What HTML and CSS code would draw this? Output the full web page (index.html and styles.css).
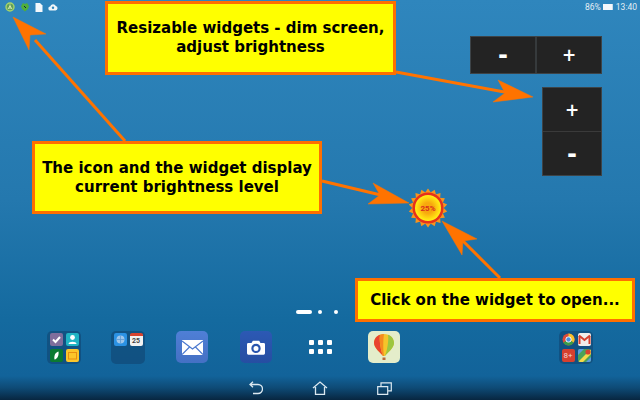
FILE: index.html
```html
<!DOCTYPE html>
<html lang="en">
<head>
  <meta charset="UTF-8" />
  <title>Brightness widgets</title>
  <link rel="stylesheet" href="styles.css">
</head>
<body>
  <div class="desktop">
    <div class="status-bar">
      <div class="status-icons">
        <svg width="10" height="10" viewBox="0 0 10 10"><circle cx="5" cy="5" r="4" fill="#5f9e5a" stroke="#a5d46a" stroke-width="1.4"/><path d="M5 2.500V7M3 7l2-3 2 3" fill="none" stroke="#d8eeb0" stroke-width="1"/></svg>
        <svg width="10" height="10" viewBox="0 0 10 10"><path d="M3 1l2 1 2-1 2 3-1 3-3 2.500L2 7 1 4z" fill="#4fae3c"/><path d="M4 4l2 2" stroke="#123" stroke-width="1"/></svg>
        <svg width="8" height="9" viewBox="0 0 8 9"><path d="M0.500 0H5L7.500 2.500V9H0.500z" fill="#f4f8fb"/></svg>
        <svg width="10" height="8" viewBox="0 0 10 8"><path d="M2.500 7.500a2 2 0 0 1-.3-4A3 3 0 0 1 7.800 3a2.300 2.300 0 0 1-.2 4.500z" fill="#f0f5f8"/><circle cx="5" cy="4.800" r="1.200" fill="#2e86bf"/></svg>
      </div>
      <div class="status-right">
        <span>86%</span>
        <span class="battery"></span>
        <span class="clock">13:40</span>
      </div>
    </div>

    <div class="pager">
      <span class="page-dash"></span>
      <span class="page-dot"></span>
      <span class="page-dot"></span>
    </div>

    <div class="dock">
      <div class="folder">
        <span class="mini mini-purple"><svg viewBox="0 0 13 13"><path d="M3 6.500l2.500 2.500L10 4" fill="none" stroke="#fff" stroke-width="2"/></svg></span>
        <span class="mini mini-teal"><svg viewBox="0 0 13 13"><circle cx="6.500" cy="4.500" r="2.400" fill="#fff"/><path d="M2.500 11c0-3 8-3 8 0z" fill="#fff"/></svg></span>
        <span class="mini mini-green"><svg viewBox="0 0 13 13"><path d="M8.500 2.500C5 3.500 3.800 7 4.500 10.500 7.500 10 9 6 8.500 2.500z" fill="#fff"/></svg></span>
        <span class="mini mini-yellow"><svg viewBox="0 0 13 13"><rect x="2.500" y="3.500" width="8" height="6.500" fill="none" stroke="#e88f10" stroke-width="1"/></svg></span>
      </div>
      <div class="folder">
        <span class="mini mini-blue"><svg viewBox="0 0 13 13"><circle cx="6.500" cy="6.500" r="4" fill="#9fc6ea"/><path d="M2.500 6.500h8M6.500 2.500v8" stroke="#5f9ad2" stroke-width=".8"/></svg></span>
        <span class="mini mini-cal"><span class="cal-day">25</span></span>
      </div>
      <div class="app app-mail">
        <svg width="21" height="15" viewBox="0 0 21 15"><rect width="21" height="15" fill="#fff"/><path d="M0 1l10.500 8L21 1M0 14.500l7.500-7.500M21 14.500L13.500 7" fill="none" stroke="#4a78cf" stroke-width="1.200"/></svg>
      </div>
      <div class="app app-camera">
        <svg width="18" height="15" viewBox="0 0 20 16"><path d="M1.500 3H5l1.500-2.500h7L15 3h3.500A1.500 1.500 0 0 1 20 4.500v10a1.500 1.500 0 0 1-1.500 1.500h-17A1.500 1.500 0 0 1 0 14.500v-10A1.500 1.500 0 0 1 1.500 3z" fill="#fff"/><circle cx="10" cy="9" r="4" fill="none" stroke="#2a55ae" stroke-width="2.400"/></svg>
      </div>
      <div class="all-apps">
        <span></span><span></span><span></span><span></span><span></span><span></span>
      </div>
      <div class="app app-balloon">
        <svg width="24" height="28" viewBox="0 0 24 28"><path d="M12 1C6 1 2 5 2 10c0 5 6 9 9 13h2c3-4 9-8 9-13 0-5-4-9-10-9z" fill="#f5c52a"/><path d="M8 1.800C4.500 3 2 6 2 10c0 5 6 9 9 13-2-5-4-15-3-21.200z" fill="#e8432e"/><path d="M8 1.800C7 8 9 18 11 23h1C11 18 11 7 12 1c-1.500 0-2.800.3-4 .8z" fill="#f58a1f"/><path d="M16 1.800C19.500 3 22 6 22 10c0 5-6 9-9 13 2-5 4-15 3-21.200z" fill="#9cc63f"/><rect x="10.500" y="24.500" width="3" height="2.500" fill="#b8693a"/></svg>
      </div>
      <div class="dock-gap"></div>
      <div class="dock-gap"></div>
      <div class="folder">
        <span class="mini mini-plain"><svg viewBox="0 0 13 13"><circle cx="6.500" cy="6.500" r="6" fill="#dd4b39"/><path d="M6.500.5a6 6 0 0 1 5.200 9L6.500 6.500z" fill="#f5c32c"/><path d="M1.300 9.500a6 6 0 0 0 10.400 0L6.500 6.500z" fill="#3a9e48"/><circle cx="6.500" cy="6.500" r="3" fill="#fff"/><circle cx="6.500" cy="6.500" r="2.200" fill="#4a8fe0"/></svg></span>
        <span class="mini mini-gmail"><svg viewBox="0 0 13 13"><path d="M1.500 3v8M11.500 3v8" stroke="#d6402f" stroke-width="2"/><path d="M1 2.500l5.500 4.500L12 2.500" fill="none" stroke="#d6402f" stroke-width="2"/></svg></span>
        <span class="mini mini-gplus"><span class="gplus-text">8+</span></span>
        <span class="mini mini-plain"><svg viewBox="0 0 13 13"><rect width="13" height="13" fill="#4ca257"/><path d="M0 13L13 0v5L5 13z" fill="#f5d94a"/><path d="M0 0h6L0 6z" fill="#5b9be0"/><path d="M8 13l5-5v5z" fill="#5b9be0"/><circle cx="10" cy="3" r="2.600" fill="#d6402f"/></svg></span>
      </div>
    </div>

    <div class="nav-bar">
      <svg width="14" height="14" viewBox="0 0 14 14"><path d="M1 3.500h8a4 4 0 0 1 0 9H4M4 .8L1 3.500l3 2.700" fill="none" stroke="#dbe8f0" stroke-width="1.300"/></svg>
      <svg width="16" height="14" viewBox="0 0 16 14"><path d="M1 7l7-6 7 6M3.500 6v7.500h9V6" fill="none" stroke="#dbe8f0" stroke-width="1.300"/></svg>
      <svg width="15" height="13" viewBox="0 0 15 13"><path d="M.7 4.700h10v7.600H.7zM4 4.500V.8h10.300v8H11" fill="none" stroke="#dbe8f0" stroke-width="1.200"/></svg>
    </div>

    <div class="widget widget-h">
      <button class="widget-btn widget-minus">-</button>
      <button class="widget-btn">+</button>
    </div>
    <div class="widget widget-v">
      <button class="widget-btn">+</button>
      <button class="widget-btn widget-minus">-</button>
    </div>

    <div class="sun">
      <svg width="40" height="40" viewBox="-20 -20 40 40">
        <defs>
          <path id="spike" d="M-3.200-15L0-19.500 3.200-15z" fill="#f7941d"/>
          <radialGradient id="sunFill"><stop offset="0.400" stop-color="#f8a80e"/><stop offset="0.850" stop-color="#ffdf12"/><stop offset="1" stop-color="#fff01a"/></radialGradient>
        </defs>
        <use href="#spike"/><use href="#spike" transform="rotate(20)"/><use href="#spike" transform="rotate(40)"/>
        <use href="#spike" transform="rotate(60)"/><use href="#spike" transform="rotate(80)"/><use href="#spike" transform="rotate(100)"/>
        <use href="#spike" transform="rotate(120)"/><use href="#spike" transform="rotate(140)"/><use href="#spike" transform="rotate(160)"/>
        <use href="#spike" transform="rotate(180)"/><use href="#spike" transform="rotate(200)"/><use href="#spike" transform="rotate(220)"/>
        <use href="#spike" transform="rotate(240)"/><use href="#spike" transform="rotate(260)"/><use href="#spike" transform="rotate(280)"/>
        <use href="#spike" transform="rotate(300)"/><use href="#spike" transform="rotate(320)"/><use href="#spike" transform="rotate(340)"/>
        <circle r="15.500" fill="#e8301a"/>
        <circle r="13" fill="url(#sunFill)"/>
      </svg>
      <span class="sun-label">25%</span>
    </div>

    <svg class="arrows" width="640" height="400" viewBox="0 0 640 400">
      <g fill="#ff7300" stroke="#ff7300">
        <path d="M125 141L35 40" stroke-width="3"/>
        <path d="M13 17L46 34 30 35 29 50z" stroke-width="0.500"/>
        <path d="M396 72L510 93" stroke-width="3"/>
        <path d="M533 97L498 80 505 93 493 102z" stroke-width="0.500"/>
        <path d="M322 181L385 196" stroke-width="3"/>
        <path d="M409 203L373 183 380 195 368 204z" stroke-width="0.500"/>
        <path d="M500 278L460 238" stroke-width="3"/>
        <path d="M442 221L477 239 463 241 462 255z" stroke-width="0.500"/>
      </g>
    </svg>

    <div class="callout callout-top">Resizable widgets - dim screen,<br>adjust brightness</div>
    <div class="callout callout-left">The icon and the widget display<br>current brightness level</div>
    <div class="callout callout-open">Click on the widget to open...</div>
  </div>
</body>
</html>
```

FILE: styles.css
```css
body {
  margin: 0;
  font-family: 'Roboto', sans-serif;
}

.desktop {
  position: relative;
  width: 640px;
  height: 400px;
  overflow: hidden;
  display: flex;
  flex-direction: column;
  background: linear-gradient(#2f86bd 0%, #2478ae 50%, #146a9f 80%, #12639a 94%, #0e4a75 97%, #082640 100%);
}

/* status bar */
.status-bar {
  display: flex;
  justify-content: space-between;
  align-items: center;
  height: 14px;
  padding: 0 3px 0 5px;
  color: #e3eef5;
  font-size: 8.5px;
}

.status-icons {
  display: flex;
  align-items: center;
  gap: 5px;
}

.status-right {
  display: flex;
  align-items: center;
  gap: 2px;
}

.battery {
  width: 9px;
  height: 6px;
  background: #f4f8fb;
  border-right: 1px solid #c8dcea;
}

.clock {
  margin-left: 1px;
}

/* home screen pages */
.pager {
  display: flex;
  align-items: center;
  margin: 296px 0 0 296px;
  gap: 6px;
  height: 4px;
}

.page-dash {
  width: 16px;
  height: 4px;
  border-radius: 2px;
  background: #fff;
}

.page-dot {
  width: 4px;
  height: 4px;
  border-radius: 50%;
  background: #fff;
}

.page-dot + .page-dot {
  margin-left: 6px;
}

/* dock */
.dock {
  display: grid;
  grid-template-columns: repeat(9, 64px);
  justify-items: center;
  align-items: center;
  padding: 0 32px;
  margin-top: 16px;
  height: 34px;
}

.folder {
  display: grid;
  grid-template-columns: 13px 13px;
  grid-auto-rows: 13px;
  gap: 3px;
  align-content: start;
  width: 34px;
  height: 33px;
  box-sizing: border-box;
  padding: 2px;
  justify-content: center;
  border-radius: 5px;
  background: rgba(16, 66, 110, 0.55);
}

.mini {
  display: block;
  border-radius: 2px;
  overflow: hidden;
}

.mini svg {
  display: block;
  width: 13px;
  height: 13px;
}

.mini-purple { background: #7f6e9c; }
.mini-teal { background: #20b4c4; }
.mini-green { background: #0b7a32; }
.mini-yellow { background: #fcc62a; }
.mini-blue { background: #2b92e4; }
.mini-gmail { background: #f1eeea; }
.mini-plain { background: transparent; }

.mini-cal {
  background: #f2f2f2;
  border-top: 3px solid #d9432f;
  box-sizing: border-box;
  text-align: center;
}

.cal-day {
  display: block;
  font-size: 7px;
  line-height: 10px;
  font-weight: 700;
  color: #444;
}

.mini-gplus {
  background: #d6402f;
  text-align: center;
}

.gplus-text {
  display: block;
  font-size: 8px;
  line-height: 13px;
  color: #f5d5cf;
}

.app {
  display: flex;
  align-items: center;
  justify-content: center;
  width: 32px;
  height: 32px;
  border-radius: 5px;
}

.app-mail { background: linear-gradient(#4f7fd6, #4470c4); }
.app-camera { background: linear-gradient(#2c59b4, #264ea2); }
.app-balloon { background: #e4edca; }

.all-apps {
  display: grid;
  grid-template-columns: repeat(3, 5px);
  gap: 4px;
}

.all-apps span {
  width: 5px;
  height: 5px;
  border-radius: 1px;
  background: #fff;
}

/* navigation */
.nav-bar {
  display: grid;
  grid-template-columns: repeat(3, 64px);
  justify-content: center;
  justify-items: center;
  align-items: center;
  margin-top: 16px;
  height: 16px;
}

/* widgets on the home screen */
.widget {
  position: absolute;
  display: flex;
  box-sizing: border-box;
  background: #232323;
  border: 1px solid #3d4347;
}

.widget-h {
  left: 470px;
  top: 36px;
  width: 132px;
  height: 38px;
}

.widget-h .widget-btn + .widget-btn {
  border-left: 2px solid #363a3c;
}

.widget-v {
  left: 542px;
  top: 87px;
  width: 60px;
  height: 89px;
  flex-direction: column;
}

.widget-v .widget-btn + .widget-btn {
  border-top: 1px solid #3a3a3a;
}

.widget-btn {
  flex: 1;
  padding: 0;
  border: none;
  background: none;
  color: #fff;
  font-family: 'DejaVu Sans', sans-serif;
  font-size: 17px;
  font-weight: 700;
}

.widget-minus {
  font-size: 24px;
}

/* brightness sun */
.sun {
  position: absolute;
  left: 408px;
  top: 188px;
  width: 40px;
  height: 40px;
  display: flex;
  align-items: center;
  justify-content: center;
}

.sun svg {
  position: absolute;
  left: 0;
  top: 0;
}

.sun-label {
  position: relative;
  font-size: 8px;
  font-weight: 700;
  color: #d8301c;
}

/* annotations */
.arrows {
  position: absolute;
  left: 0;
  top: 0;
}

.callout {
  position: absolute;
  display: flex;
  align-items: center;
  justify-content: center;
  box-sizing: border-box;
  border: 3px solid #ff6f00;
  background: #ffff00;
  color: #000;
  font-family: 'DejaVu Sans', sans-serif;
  font-size: 15px;
  font-weight: 700;
  line-height: 19px;
  text-align: center;
}

.callout-top {
  left: 105px;
  top: 1px;
  width: 291px;
  height: 74px;
}

.callout-left {
  left: 32px;
  top: 141px;
  width: 290px;
  height: 73px;
}

.callout-open {
  left: 355px;
  top: 278px;
  width: 280px;
  height: 44px;
}
```
